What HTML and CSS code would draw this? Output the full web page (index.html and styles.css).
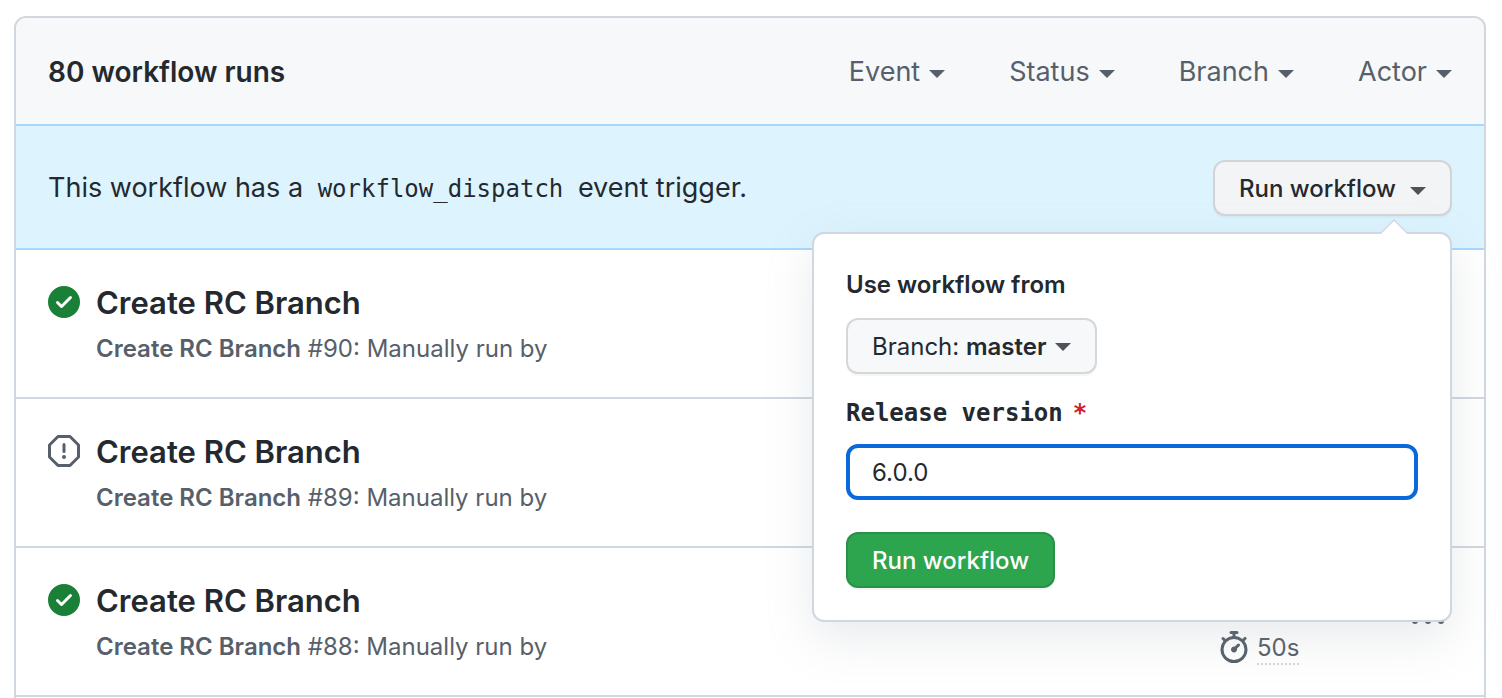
FILE: index.html
```html
<!DOCTYPE html>
<html lang="en">
  <head>
    <meta charset="utf-8">
    <title>Workflow runs</title>
    <link rel="stylesheet" href="styles.css">
  </head>
  <body>
    <main class="box">
      <!-- Header with filters -->
      <header class="box-header">
        <h1 class="box-title">80 workflow runs</h1>
        <div class="filters">
          <button type="button" class="filter">Event <span class="caret"></span></button>
          <button type="button" class="filter">Status <span class="caret"></span></button>
          <button type="button" class="filter">Branch <span class="caret"></span></button>
          <button type="button" class="filter">Actor <span class="caret"></span></button>
        </div>
      </header>

      <!-- Manual trigger -->
      <div class="dispatch">
        <p class="dispatch-text">This workflow has a <code>workflow_dispatch</code> event trigger.</p>
        <div class="dispatch-menu">
          <button type="button" class="btn btn-open">Run workflow <span class="caret"></span></button>
          <form class="popover">
            <p class="popover-label">Use workflow from</p>
            <button type="button" class="btn btn-branch"><span>Branch: <b>master</b></span> <span class="caret"></span></button>
            <label class="input-label" for="release-version">Release version<span class="required">*</span></label>
            <input class="input" id="release-version" type="text" value="6.0.0">
            <button type="button" class="btn btn-primary">Run workflow</button>
          </form>
        </div>
      </div>

      <!-- Runs -->
      <div class="run">
        <svg class="run-icon success" viewBox="0 0 16 16"><path fill-rule="evenodd" d="M8 16A8 8 0 108 0a8 8 0 000 16zm3.78-9.72a.75.75 0 00-1.06-1.06L6.75 9.19 5.28 7.72a.75.75 0 00-1.06 1.06l2 2a.75.75 0 001.06 0l4.5-4.5z"/></svg>
        <div class="run-main">
          <a class="run-title" href="#">Create RC Branch</a>
          <p class="run-sub"><b>Create RC Branch</b> #90: Manually run by</p>
        </div>
      </div>
      <div class="run">
        <svg class="run-icon" viewBox="0 0 16 16"><path fill-rule="evenodd" d="M4.47.22A.75.75 0 015 0h6a.75.75 0 01.53.22l4.25 4.25c.141.14.22.331.22.53v6a.75.75 0 01-.22.53l-4.25 4.25A.75.75 0 0111 16H5a.75.75 0 01-.53-.22L.22 11.53A.75.75 0 010 11V5a.75.75 0 01.22-.53L4.47.22zm.84 1.28L1.5 5.31v5.38l3.81 3.81h5.38l3.81-3.81V5.31L10.69 1.5H5.31zM8 4a.75.75 0 01.75.75v3.5a.75.75 0 01-1.5 0v-3.5A.75.75 0 018 4zm0 8a1 1 0 100-2 1 1 0 000 2z"/></svg>
        <div class="run-main">
          <a class="run-title" href="#">Create RC Branch</a>
          <p class="run-sub"><b>Create RC Branch</b> #89: Manually run by</p>
        </div>
      </div>
      <div class="run">
        <svg class="run-icon success" viewBox="0 0 16 16"><path fill-rule="evenodd" d="M8 16A8 8 0 108 0a8 8 0 000 16zm3.78-9.72a.75.75 0 00-1.06-1.06L6.75 9.19 5.28 7.72a.75.75 0 00-1.06 1.06l2 2a.75.75 0 001.06 0l4.5-4.5z"/></svg>
        <div class="run-main">
          <a class="run-title" href="#">Create RC Branch</a>
          <p class="run-sub"><b>Create RC Branch</b> #88: Manually run by</p>
        </div>
        <div class="run-meta">
          <svg class="icon" viewBox="0 0 16 16"><path fill-rule="evenodd" d="M5.75.75A.75.75 0 016.5 0h3a.75.75 0 010 1.5h-.75v1l-.001.041a6.718 6.718 0 013.464 1.435l.007-.006.75-.75a.75.75 0 111.06 1.06l-.75.75-.006.007a6.75 6.75 0 11-10.548 0L2.72 5.03l-.75-.75a.75.75 0 011.06-1.06l.75.75.007.006A6.718 6.718 0 017.25 2.541a.756.756 0 010-.041v-1H6.5a.75.75 0 01-.75-.75zM8 14.5A5.25 5.25 0 108 4a5.25 5.25 0 000 10.5zm.389-6.7l1.33-1.33a.75.75 0 111.061 1.06L9.45 8.861A1.502 1.502 0 018 10.75a1.5 1.5 0 11.389-2.95z"/></svg>
          <a class="duration" href="#">50s</a>
        </div>
        <button type="button" class="kebab" aria-label="Show options">
          <svg class="icon" viewBox="0 0 16 16"><path d="M8 9a1.5 1.5 0 100-3 1.5 1.5 0 000 3zM1.5 9a1.5 1.5 0 100-3 1.5 1.5 0 000 3zm13 0a1.5 1.5 0 100-3 1.5 1.5 0 000 3z"/></svg>
        </button>
      </div>
    </main>
  </body>
</html>
```
FILE: styles.css
```css
:root {
  --border: #d0d7de;
  --text: #24292f;
  --muted: #57606a;
  --accent: #0969da;
}

* {
  margin: 0;
  padding: 0;
  box-sizing: border-box;
}

body {
  display: flex;
  flex-direction: column;
  min-height: 100vh;
  padding: 16px 16px 0 14px;
  background: #fff;
  color: var(--text);
  font-family: Inter, "Liberation Sans", sans-serif;
  font-size: 24px;
  line-height: 36px;
}

button,
input {
  font: inherit;
  color: inherit;
}

button {
  border: none;
  background: none;
  cursor: pointer;
}

a {
  color: inherit;
  text-decoration: none;
}

b {
  font-weight: 600;
}

.icon {
  display: block;
  width: 32px;
  height: 32px;
  fill: var(--muted);
}

.caret {
  margin-top: 4px;
  border: 8px solid transparent;
  border-top-color: currentColor;
  border-bottom-width: 0;
}

.box {
  flex: 1;
  border: 2px solid var(--border);
  border-bottom: none;
  border-radius: 12px 12px 0 0;
}

/* Header */
.box-header {
  display: flex;
  align-items: center;
  justify-content: space-between;
  padding: 33px 32px 31px;
  background: #f6f8fa;
  border-radius: 10px 10px 0 0;
  font-size: 27px;
  line-height: 42px;
}

.box-title {
  font-size: 28px;
  font-weight: 600;
}

.filters {
  display: flex;
  gap: 64px;
}

.filter {
  display: flex;
  align-items: center;
  gap: 9px;
  color: var(--muted);
}

/* Manual trigger */
.dispatch {
  display: flex;
  align-items: center;
  justify-content: space-between;
  padding: 34px 32px 32px;
  background: #ddf4ff;
  border-top: 2px solid #a5d8ff;
  border-bottom: 2px solid #a5d8ff;
}

.dispatch-text {
  font-size: 27px;
}

.dispatch-text code {
  padding: 0 7px;
  font-family: "DejaVu Sans Mono", monospace;
  font-size: 24px;
}

.dispatch-menu {
  position: relative;
}

.btn {
  display: flex;
  align-items: center;
  height: 56px;
  padding: 2px 24px 0;
  border: 2px solid rgba(27, 31, 36, 0.15);
  border-radius: 12px;
  background: #f6f8fa;
  box-shadow: 0 2px 0 rgba(27, 31, 36, 0.04);
}

.btn .caret {
  color: #4f5358;
}

.btn-open {
  gap: 14px;
  background: #f3f4f6;
  font-weight: 500;
}

.btn-branch {
  gap: 8px;
  margin-bottom: 21px;
}

.btn-branch .caret {
  margin-top: 0;
}

.btn-primary {
  background: #2da44e;
  color: #fff;
  font-weight: 500;
}

/* Popover */
.popover {
  position: absolute;
  top: 72px;
  right: 0;
  z-index: 1;
  width: 640px;
  padding: 33px 32px 32px;
  background: #fff;
  border: 2px solid var(--border);
  border-radius: 12px;
  box-shadow: 0 16px 48px rgba(140, 149, 159, 0.2);
}

.popover::before,
.popover::after {
  content: "";
  position: absolute;
  top: -15px;
  right: 41px;
  border: 15px solid transparent;
  border-top-width: 0;
  border-bottom-color: var(--border);
}

.popover::after {
  top: -13px;
  border-bottom-color: #fff;
}

.popover-label {
  margin-bottom: 15px;
  font-weight: 600;
}

.input-label {
  display: block;
  margin-bottom: 13px;
  font-family: "DejaVu Sans Mono", monospace;
  font-weight: 700;
}

.required {
  margin-left: 10px;
  color: #cf222e;
}

.input {
  display: block;
  width: 100%;
  height: 56px;
  margin-bottom: 32px;
  padding: 0 22px;
  border: 4px solid var(--accent);
  border-radius: 12px;
  outline: none;
  background: #fff;
}

/* Runs */
.run {
  display: flex;
  align-items: center;
  padding: 29px 32px 30px;
  border-bottom: 2px solid var(--border);
}

.run-icon {
  align-self: flex-start;
  width: 32px;
  height: 32px;
  margin: 7px 16px 0 0;
  fill: var(--muted);
}

.run-icon.success {
  fill: #1a7f37;
}

.run-main {
  flex: 1;
}

.run-title {
  display: block;
  margin-bottom: 4px;
  font-size: 31px;
  font-weight: 600;
  line-height: 48px;
}

.run-sub {
  color: var(--muted);
}

.run-meta {
  display: flex;
  align-items: flex-start;
  align-self: flex-end;
  gap: 7px;
  width: 186px;
  color: var(--muted);
}

.duration {
  margin-top: 2px;
  border-bottom: 2px dotted var(--border);
  line-height: 30px;
}

.kebab {
  padding: 10px 8px 8px;
}
```
